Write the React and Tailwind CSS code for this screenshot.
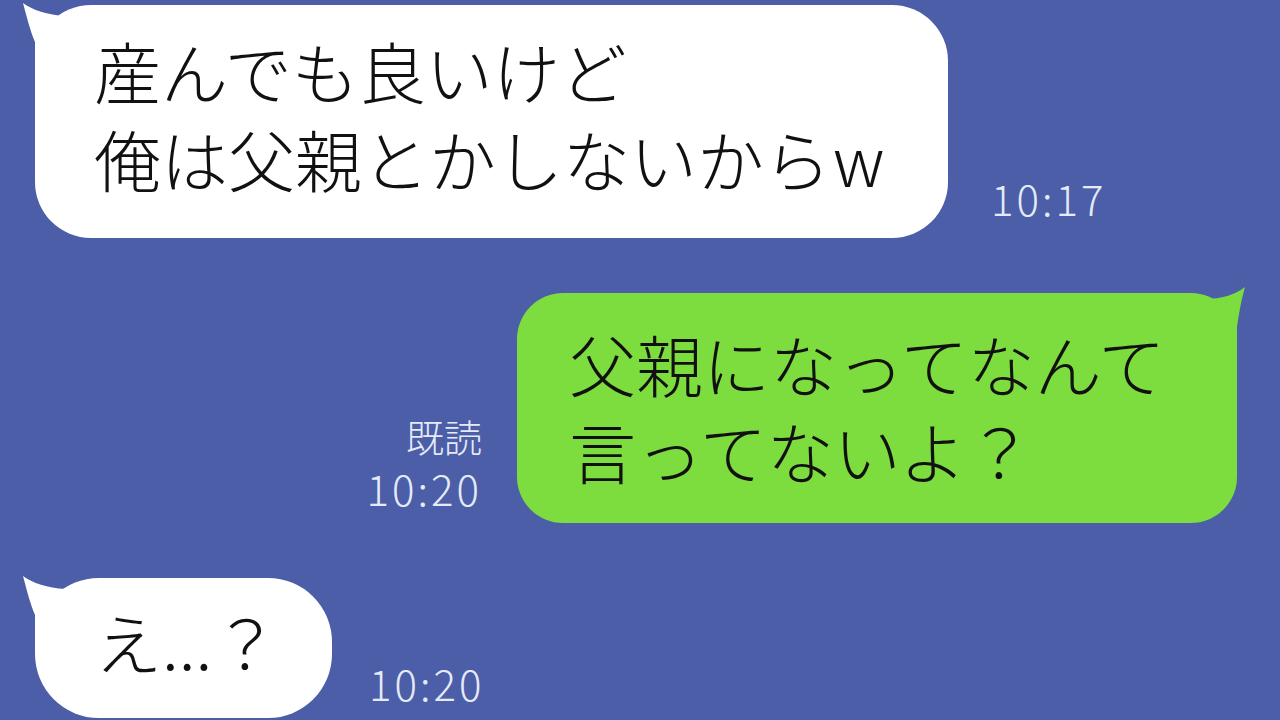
import React from "react";

const JP = { fontFamily: '"Noto Sans CJK JP", "Noto Sans", sans-serif' };

function WhiteTail() {
  return (
    <svg
      className="absolute left-[-15px] top-[-5px]"
      width="70"
      height="70"
      viewBox="0 0 70 70"
    >
      <path
        d="M3,3 C7,18 10,30 15,42 L15,70 L70,70 L70,16 L45,16 C28,15 12,10 3,3 Z"
        fill="#ffffff"
      />
    </svg>
  );
}

function GreenTail() {
  return (
    <svg
      className="absolute right-[-12px] top-[-8px]"
      width="70"
      height="70"
      viewBox="0 0 70 70"
    >
      <path
        d="M66,2 C62,16 60,28 58,42 L58,70 L0,70 L0,14 L26,14 C42,14 56,10 66,2 Z"
        fill="#7ddc3e"
      />
    </svg>
  );
}

export default function App() {
  return (
    <div
      className="w-[1280px] h-[720px] overflow-hidden bg-[#4b5ea7] flex flex-col"
      style={JP}
    >
      {/* Row 1 */}
      <div className="flex items-end mt-[5px] ml-[35px] gap-[43px]">
        <div className="relative w-[913px] h-[233px] rounded-[56px] bg-white flex flex-col justify-center pl-[59px] pb-[16px]">
          <WhiteTail />
          <div className="relative text-[67px] font-light leading-[88px] text-[#111111] whitespace-nowrap">
            産んでも良いけど
          </div>
          <div className="relative text-[67px] font-light leading-[88px] text-[#111111] whitespace-nowrap">
            俺は父親とかしないから<span className="ml-[2px]">w</span>
          </div>
        </div>
        <div className="text-[42px] font-light leading-[44px] tracking-[3px] text-[#e4ebf7] mb-[18px]">
          10:17
        </div>
      </div>

      {/* Row 2 */}
      <div className="flex items-end justify-end mt-[55px] pr-[43px] gap-[35px]">
        <div className="flex flex-col items-end mb-[13px] text-[#e4ebf7]">
          <div className="text-[38px] font-light leading-[44px] mb-[8px]">既読</div>
          <div className="text-[42px] font-light leading-[44px] tracking-[3px]">10:20</div>
        </div>
        <div className="relative w-[720px] h-[230px] rounded-[46px] bg-[#7ddc3e] flex flex-col justify-center pl-[52px] pb-[4px]">
          <GreenTail />
          <div className="relative text-[67px] font-light leading-[87px] text-[#111111] whitespace-nowrap">
            父親になってなんて
          </div>
          <div className="relative text-[67px] font-light leading-[87px] text-[#111111] whitespace-nowrap">
            言ってないよ？
          </div>
        </div>
      </div>

      {/* Row 3 */}
      <div className="flex items-end mt-[55px] ml-[35px] gap-[37px]">
        <div className="relative w-[297px] h-[140px] rounded-[64px] bg-white flex items-center pl-[60px] pb-[14px]">
          <WhiteTail />
          <div className="relative text-[67px] font-light leading-[88px] text-[#111111] whitespace-nowrap">
            え...？
          </div>
        </div>
        <div className="text-[42px] font-light leading-[44px] tracking-[3px] text-[#e4ebf7] mb-[13px]">
          10:20
        </div>
      </div>
    </div>
  );
}
